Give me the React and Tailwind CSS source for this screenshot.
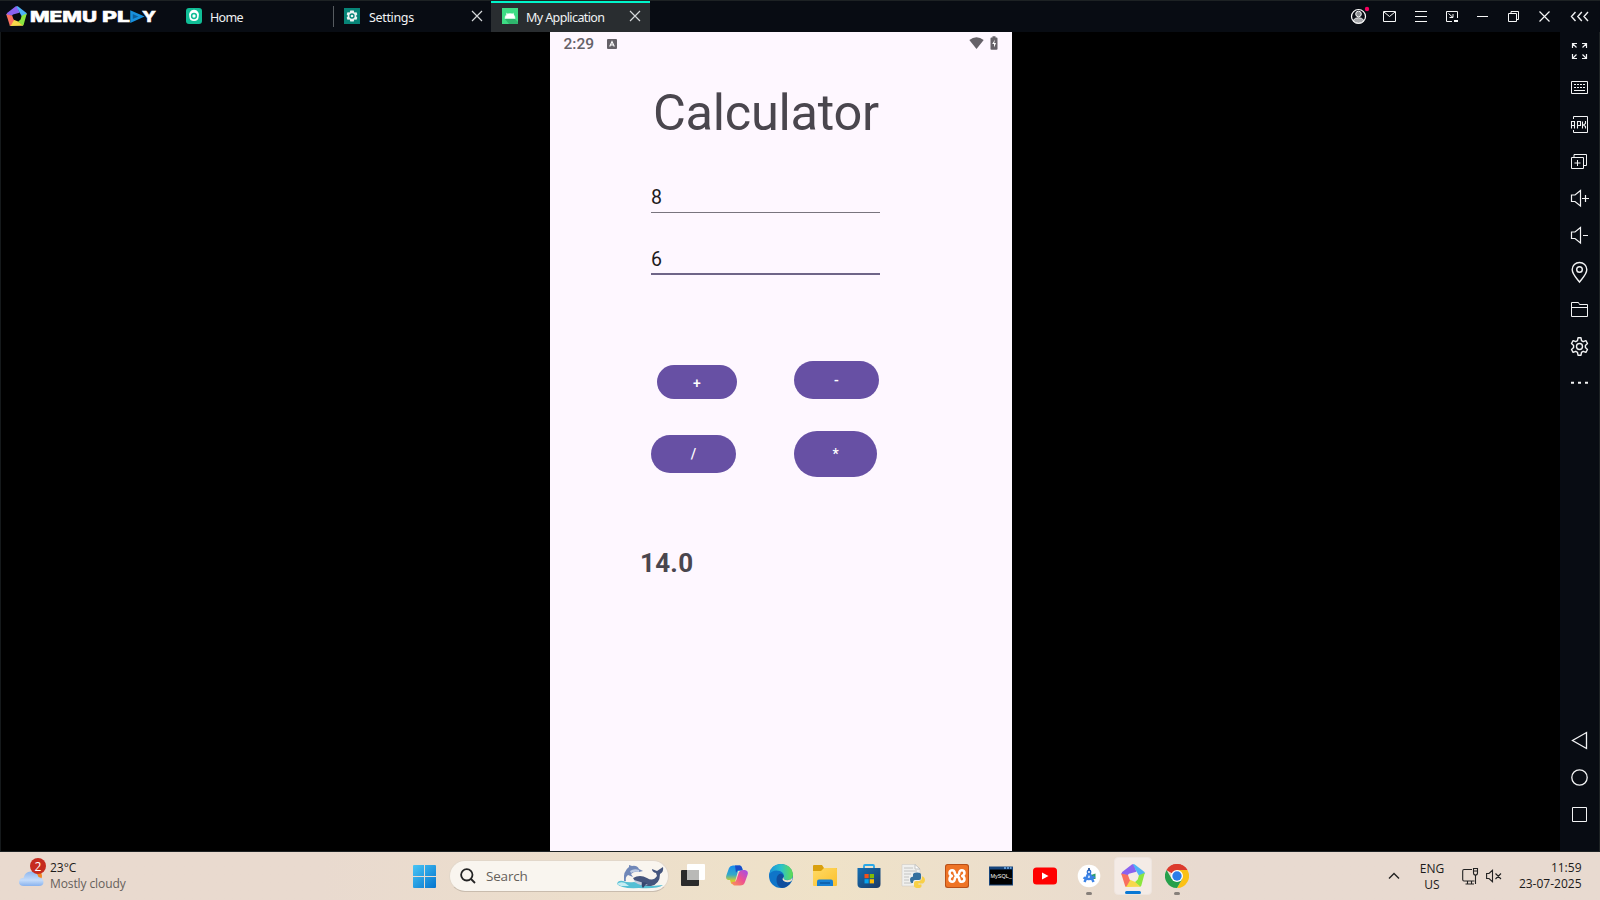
import React from "react";

const SEGOE = "font-['Open_Sans',sans-serif]";

function MemuLogo({ className }) {
  return (
    <svg className={className} viewBox="0 0 73 71">
      <path d="M3 25L34 1Q38 0 40 3L47 24L24 30L20 35L0 32Z" fill="#8a62f0" />
      <path d="M36 1L41 1L71 24Q74 27 72 30L56 38L47 22Z" fill="#4db2f7" />
      <path d="M73 27L62 67Q61 70 57 70L42 56L51 48L55 35Z" fill="#8be63f" />
      <path d="M60 70L16 71L12 68L25 48L42 55Z" fill="#f7d84a" />
      <path d="M0 29L13 70L17 69L27 51L21 34Z" fill="#f9705f" />
    </svg>
  );
}

function Wordmark() {
  return (
    <svg className="ml-[3px] h-[20px] w-[128px]" viewBox="0 0 128 20">
      <g fill="#fff" stroke="#fff" strokeWidth="0.5" fontFamily="Inter, sans-serif" fontWeight="800" fontSize="14.8">
        <text x="0" y="15.7" textLength="67" lengthAdjust="spacingAndGlyphs">MEMU</text>
        <text x="72" y="15.7" textLength="28" lengthAdjust="spacingAndGlyphs">PL</text>
        <text x="112" y="15.7" textLength="14" lengthAdjust="spacingAndGlyphs">Y</text>
      </g>
      <path d="M101.500 6.200L111.500 10.600L101.500 15Z" fill="#0c5f9c" stroke="#1790dd" strokeWidth="2.5" />
    </svg>
  );
}

const CloseX = () => (
  <svg className="h-[12px] w-[12px]" viewBox="0 0 12 12" stroke="#d5d8da" strokeWidth="1.2">
    <path d="M1 1L11 11M11 1L1 11" />
  </svg>
);

const HEADER_ICONS = [
  <g key="user">
    <circle cx="15.5" cy="16.5" r="7" fill="#0a0e15" stroke="#fff" strokeWidth="1.2" />
    <circle cx="15.5" cy="14" r="2.8" fill="#8d9094" />
    <path d="M10 20.5Q12 17.7 15.5 17.7T21 20.5Q19 23.2 15.5 23.2T10 20.5Z" fill="#a5a7aa" />
    <circle cx="24" cy="9" r="2.2" fill="#f5005f" stroke="none" />
  </g>,
  <path key="mail" d="M9.500 11.500H21.500V21.500H9.500ZM10 12L15.500 16.500L21 12" />,
  <path key="menu" d="M10 11.500H22M10 16.500H22M10 21.500H22" />,
  <g key="pip">
    <path d="M16 21.500H10.500V11.500H21.500V18M12.500 13.500L17 17.500M17 14V17.500H13.500" />
    <path d="M18 21H22" strokeWidth="2" />
  </g>,
  <path key="min" d="M10 16.500H21" />,
  <path key="restore" d="M10.500 13.500H18.500V21.500H10.500ZM13 13.500V11.500H20.500V19.500H19" />,
  <path key="close" d="M10.500 11.500L20.500 21.500M20.500 11.500L10.500 21.500" strokeWidth="1.200" />,
];

const SIDE_ICONS = [
  <path key="full" strokeWidth="1.200" d="M12.500 16V11.500H17M12.500 11.500L16.500 15.500M22 11.500H26.500V16M26.500 11.500L22.500 15.500M12.500 22V26.500H17M12.500 26.500L16.500 22.500M22 26.500H26.500V22M26.500 26.500L22.500 22.500" />,
  <g key="keys">
    <path d="M11.500 12.500H27.500V24.500H11.500ZM14 21.500H25" />
    <path d="M14 15.500H26M14 18.500H26" strokeDasharray="2 1" />
  </g>,
  <g key="apk">
    <path d="M13.500 13V10.500H27.500V26.500H13.500V24" />
    <path d="M11.500 22.500V15.500H14.500V22.500M11.500 19.500H14.500M17.500 22.500V15.500H20.500V19.500H17.500M22.500 15.500V22.500M25.500 15V17.500L23.500 19L25.500 20.500V22.500" strokeWidth="1.100" />
  </g>,
  <path key="multi" d="M11.500 14.500H23.500V25.500H11.500ZM14 14.500V11.500H26.500V22.500H24M17.500 17V23M14.500 20H20.500" />,
  <path key="volup" strokeWidth="1.200" d="M20.500 10.500L15 15H11.500V21.500H15L20.500 26ZM22 18.500H29M25.500 15V22" />,
  <path key="voldn" strokeWidth="1.200" d="M20.500 10.500L15 15H11.500V21.500H15L20.500 26ZM23 18.500H28" />,
  <g key="pin" strokeWidth="1.4">
    <path d="M19.500 28C16 23.500 12.200 20 12.200 15.500A7.300 7 0 0 1 26.800 15.500C26.800 20 23 23.500 19.500 28Z" />
    <circle cx="19.500" cy="15.500" r="2.800" />
  </g>,
  <path key="folder" d="M11.500 25.500V11.500H18.500L19.500 13.500H27.500V25.500ZM12 16.500H27" />,
  <g key="gear" strokeWidth="1.4">
    <path d="M17.500 12.700L18 9.800H21L21.500 12.700L23.200 13.700L25.900 12.700L27.500 15.500L25.400 17.400V19.600L27.500 21.500L25.900 24.300L23.200 23.300L21.500 24.300L21 27.200H18L17.500 24.300L15.800 23.300L13.100 24.300L11.500 21.500L13.600 19.600V17.400L11.500 15.500L13.100 12.700L15.800 13.700Z" strokeLinejoin="round" />
    <circle cx="19.500" cy="18.500" r="3" />
  </g>,
  <path key="more" d="M11 17.800H14M18 17.800H21M25 17.800H28" strokeWidth="2" />,
];

const NAV_ICONS = [
  <path key="back" d="M26.500 10.500V26.500L12.500 18.500Z" strokeWidth="1.300" />,
  <circle key="home" cx="19.500" cy="18.500" r="7.700" strokeWidth="1.300" />,
  <path key="recent" d="M12.500 11.500H26.500V25.500H12.500Z" />,
];

const SideIcon = ({ children }) => (
  <svg className="h-[37px] w-[39px] shrink-0" viewBox="0 0 39 37" fill="none" stroke="#f2f3f4" strokeWidth="1">
    {children}
  </svg>
);

function Tabs() {
  return (
    <div className="flex h-[32px] font-['Noto_Sans',sans-serif] text-[12.5px] text-[#f0f2f3]">
      <div className="flex w-[163px] items-center pl-[16px]">
        <svg className="h-[16px] w-[16px]" viewBox="0 0 16 16">
          <rect width="16" height="16" rx="3" fill="#10bd96" />
          <path d="M3.300 8.500A5 5 0 1 1 12.700 8.500Q12.500 13 8 13T3.300 8.500Z" fill="#fff" />
          <circle cx="8" cy="8" r="2.400" fill="#fff" stroke="#10bd96" strokeWidth="1.500" />
        </svg>
        <span className="ml-[8px] pt-[4px] tracking-[-0.7px]">Home</span>
      </div>
      <div className="flex w-[158px] items-center">
        <div className="h-[21px] w-px bg-[#565b60]" />
        <svg className="ml-[10px] h-[16px] w-[16px]" viewBox="0 0 16 16">
          <rect width="16" height="16" fill="#078477" />
          <path d="M8 2.500L9.700 2.500L10.300 4.500L12.500 4.300L13.300 6.300L12 8L13.300 9.800L12.500 11.700L10.300 11.500L9.700 13.500H6.300L5.700 11.500L3.500 11.700L2.700 9.800L4 8L2.700 6.300L3.500 4.300L5.700 4.500L6.300 2.500Z" fill="#eef5f4" />
          <circle cx="8" cy="8" r="2" fill="none" stroke="#078477" strokeWidth="1.300" />
        </svg>
        <span className="ml-[9px] w-[102px] pt-[4px] tracking-[-0.35px]">Settings</span>
        <CloseX />
      </div>
      <div className="mt-px flex w-[159px] items-center border-t-2 border-[#00f5cb] bg-[#292d30] pl-[11px]">
        <svg className="-mt-[3px] h-[16px] w-[16px]" viewBox="0 0 16 16">
          <rect width="16" height="16" fill="#3ddc84" />
          <path d="M3 11L13 11L16 14V16H7Z" fill="#2fb56d" />
          <path d="M3 10.500Q3.300 7.500 5.500 6.200L4.700 4.800M13 10.500Q12.700 7.500 10.500 6.200L11.300 4.800M3 10.500Q3.300 5.500 8 5.500T13 10.500Z" fill="#fff" stroke="#fff" strokeWidth="0.400" />
        </svg>
        <span className="ml-[8px] w-[103px] pt-[1px] tracking-[-0.6px]">My Application</span>
        <div className="-mt-[3px]"><CloseX /></div>
      </div>
    </div>
  );
}

const OpButton = ({ className, children }) => (
  <div className={"flex items-center justify-center rounded-full bg-[#6750a4] text-[14px] font-medium text-white " + className}>
    {children}
  </div>
);

function Phone() {
  return (
    <main className="h-[819px] w-[462px] bg-[#fef7ff] font-[Roboto,sans-serif]">
      <div className="flex h-[24px] items-center pl-[13.5px] pr-[14px] text-[#656168]">
        <span className="w-[43.5px] pt-[2px] text-[15.5px] font-medium">2:29</span>
        <svg className="h-[10px] w-[10px]" viewBox="0 0 10 10">
          <rect width="10" height="10" rx="1" fill="#656168" />
          <path d="M2.700 7.500L5 2.500L7.300 7.500M3.500 6H6.500" stroke="#fff" strokeWidth="1.100" fill="none" />
        </svg>
        <svg className="-mt-[2px] ml-auto h-[12px] w-[15px]" viewBox="0 0 15 12">
          <path d="M0.300 3Q7.500 -2.500 14.700 3L7.500 12Z" fill="#656168" />
        </svg>
        <svg className="-mt-[2px] ml-[6px] h-[14px] w-[8px]" viewBox="0 0 8 14">
          <path d="M0.500 2.500Q0.500 1.500 1.500 1.500H2.500V0.300H5.500V1.500H6.500Q7.500 1.500 7.500 2.500V13Q7.500 13.700 6.500 13.700H1.500Q0.500 13.700 0.500 13Z" fill="#656168" />
          <path d="M5 3.500L2.200 8H4V11.500L6 7H4.200Z" fill="#fff" />
        </svg>
      </div>
      <h1 className="mt-[27px] pl-[103px] text-[50.5px] leading-[60px] tracking-[-0.28px] text-[#4a464e]">Calculator</h1>
      <div className="ml-[101px] mt-[37px] w-[229px] text-[19.5px] text-[#1d1b20]">
        <div className="h-[33px] border-b border-[#79747e] leading-[36px]">8</div>
        <div className="mt-[28px] h-[34px] border-b-2 border-[#6f6588] leading-[38px]">6</div>
      </div>
      <div className="ml-[101px] mt-[86px] flex h-[38px] items-end">
        <OpButton className="ml-[6px] h-[34px] w-[80px] pt-[2px]">+</OpButton>
        <OpButton className="ml-[57px] h-[38px] w-[85px]">-</OpButton>
      </div>
      <div className="ml-[101px] mt-[32px] flex h-[46px] items-center">
        <OpButton className="h-[38px] w-[85px] pt-px">/</OpButton>
        <OpButton className="ml-[58px] h-[46px] w-[83px] pt-px">*</OpButton>
      </div>
      <div className="ml-[90px] mt-[71px] text-[26px] font-bold leading-[30px] tracking-[0.25px] text-[#4a464e]">14.0</div>
    </main>
  );
}

const TASK_ICONS = [
  <g key="view">
    <rect x="6" y="0" width="18" height="16" rx="1" fill="#fff" />
    <rect x="0" y="6" width="18" height="16" rx="1" fill="#2b2b2b" />
    <rect x="6" y="6" width="12" height="10" fill="#b9b9b7" />
  </g>,
  <g key="copilot">
    <path d="M8 1.500H15Q17 2 17.500 5L18 7H13L10 18Q9 21 6 19.500L5 16H3Q0 15 1.500 11L4 4Q5 1.500 8 1.500Z" fill="url(#cpA)" />
    <path d="M10 1.500H15Q17 2 17.500 6H14Q12 6 11 9Z" fill="#1b4cc8" />
    <path d="M18 6H20Q24 7 22.500 11L20 18Q19 21.500 15 21.500H9Q7 21 6.500 18H9Q11 18 12 14L14 8Q15 6 18 6Z" fill="url(#cpB)" />
  </g>,
  <g key="edge">
    <circle cx="12" cy="12" r="12" fill="#0f75c9" />
    <path d="M0.500 10Q2 0 12 0T24 10Q24 16 18 16Q14 16 14.500 13.500Q16 9 11 7Q4 5 0.500 10Z" fill="url(#edG)" />
    <path d="M14.500 13.500Q13 17 17 18Q20 19 22.500 17Q19 24 13 24Q7 22 7.500 15Q8 10 12 9.500Q15.500 10.500 14.500 13.500Z" fill="#104e9e" />
    <path d="M14.500 13Q14 16.200 18.500 16.200Q22 16 23.600 13.500L22.600 17Q19 19 16 17.800Q12 16 14.500 13Z" fill="#f0e2c8" />
  </g>,
  <g key="files">
    <path d="M0 2Q0 1 1 1H9L11 4H23Q24 4 24 5V20H0Z" fill="#d9a00f" />
    <path d="M0 7H8L11 4H23Q24 4 24 5V21Q24 22 23 22H1Q0 22 0 21Z" fill="url(#flG)" />
    <path d="M4 22V17.500Q4 15.500 6 15.500H18Q20 15.500 20 17.500V22Z" fill="#1780d4" />
    <path d="M7 19H17" stroke="#0b5aa5" strokeWidth="1.500" />
  </g>,
  <g key="store">
    <path d="M7 5V2Q7 1 8 1H16Q17 1 17 2V5" fill="none" stroke="#28a8e8" strokeWidth="1.800" />
    <path d="M0.500 4H23.500V20Q23.500 24 19.500 24H4.500Q0.500 24 0.500 20Z" fill="url(#stG)" />
    <path d="M7.500 10H11.700V14.200H7.500Z" fill="#f2511b" />
    <path d="M12.700 10H17V14.200H12.700Z" fill="#80ba06" />
    <path d="M7.500 15.200H11.700V19.400H7.500Z" fill="#05a5f0" />
    <path d="M12.700 15.200H17V19.400H12.700Z" fill="#fdba08" />
  </g>,
  <g key="python">
    <path d="M1 0.500H14L19 5V22H1Z" fill="#f0f0ee" stroke="#c9c7c2" strokeWidth="0.500" />
    <path d="M14 0.500L19 5H14ZM3 4H12M3 7H16M3 10H10M3 13H8M3 16H8M3 19H11" fill="#fff" stroke="#bdbdbb" strokeWidth="0.900" />
    <path d="M12 14V10.500Q12 8.500 16 8.500T20 10.500V14Q20 16 18 16H14Q12 16 12 19H10.500Q9 18 9 15.500T12 12.500H16" fill="#34709f" />
    <path d="M21 12.500H22Q24 13.500 24 16T22 19.500H17.500V20.500H20.500V22Q20.500 24 17 24T13 22V19Q13 17 15 17H18.500Q21 16.500 21 14Z" fill="#f8d047" />
  </g>,
  <g key="xampp">
    <rect width="24" height="24" rx="2.500" fill="#b95018" />
    <rect x="1" y="1" width="22" height="22" rx="2" fill="#ee7426" />
    <path d="M6.800 12Q4.500 11 4.500 8.800Q4.700 6.200 7.200 6.200Q9.500 6.200 9.800 9Q10 11.200 12 11.200T14.200 9Q14.500 6.200 16.800 6.200Q19.300 6.200 19.500 8.800Q19.500 11 17.200 12Q19.500 13 19.500 15.200Q19.300 17.800 16.800 17.800Q14.500 17.800 14.200 15Q14 12.800 12 12.800T9.800 15Q9.500 17.800 7.200 17.800Q4.700 17.800 4.500 15.200Q4.500 13 6.800 12Z" fill="none" stroke="#fff" strokeWidth="2.500" strokeLinejoin="round" />
  </g>,
  <g key="mysql">
    <rect x="0" y="2.500" width="24" height="19" fill="#16457c" />
    <rect x="1" y="5.500" width="22" height="15" fill="#000" />
    <path d="M15 4H17M18 4H20M21 4H22.500" stroke="#78b5ef" strokeWidth="1.300" />
    <text x="1.500" y="13.500" fontSize="5.500" fontFamily="Liberation Sans, sans-serif" fill="#fff">MySQL_</text>
  </g>,
  <g key="youtube">
    <rect x="0" y="3.500" width="24" height="17" rx="3.500" fill="#f00" />
    <path d="M9 8.500L15.500 12L9 15.500Z" fill="#fff" />
  </g>,
  <g key="studio">
    <circle cx="12" cy="12" r="11.300" fill="#fff" />
    <path d="M14 11L18.500 9.500V15H14Z" fill="#2e9e68" />
    <path d="M12 8L7.500 18M12 8L16.500 18M6.500 13.500Q12 17 17.500 12.500" fill="none" stroke="#3b82e6" strokeWidth="2.500" />
    <circle cx="12" cy="8" r="1.700" fill="#fff" stroke="#3477d8" strokeWidth="1.500" />
    <path d="M12 4V6.500" stroke="#2a579e" strokeWidth="1.800" />
  </g>,
  null,
  <g key="chrome">
    <path d="M12 12L1.600 6A12 12 0 0 1 22.400 6Z" fill="#dc3b2d" />
    <path d="M12 12V6H22.400A12 12 0 0 1 12 24L17.200 15Z" fill="#fbc116" />
    <path d="M12 12L17.200 15L12 24A12 12 0 0 1 1.600 6L6.800 15Z" fill="#26a04b" />
    <path d="M1.600 6A12 12 0 0 1 22.400 6H12L6.800 9Z" fill="#dc3b2d" />
    <circle cx="12" cy="12" r="6" fill="#fff" />
    <circle cx="12" cy="12" r="4.700" fill="#2b7de9" />
  </g>,
];

function TaskIcon({ index, icon }) {
  if (index === 10) {
    return (
      <div className="flex h-[48px] w-[44px] items-center justify-center">
        <div className="flex h-[38px] w-[38px] flex-col items-center rounded-[4px] border border-[#eee5df] bg-[#f4ebe6] pt-[6px]">
          <MemuLogo className="h-[24px] w-[24px]" />
          <div className="mt-[4px] h-[3px] w-[16px] shrink-0 rounded-full bg-[#0a78d4]" />
        </div>
      </div>
    );
  }
  return (
    <div className="flex h-[48px] w-[44px] flex-col items-center pt-[12px]">
      <svg className="h-[24px] w-[24px] shrink-0" viewBox="0 0 24 24">{icon}</svg>
      {(index === 9 || index === 11) && <div className="mt-[4px] h-[3px] w-[6px] rounded-full bg-[#87807a]" />}
    </div>
  );
}

function Taskbar() {
  return (
    <footer className={"flex h-[48px] items-center bg-linear-to-r from-[#e9dacf] from-20% via-[#efe2c8] via-52% to-[#e8dad0] to-75% text-[12px] leading-[16px] text-[#1c1b1a] " + SEGOE}>
      <svg className="h-[48px] w-[50px]" viewBox="0 0 50 48">
        <circle cx="36" cy="24" r="6" fill="#f38420" />
        <path d="M24 34Q19 34 19 30Q19 26 23.500 26Q25 19 31.500 19.500Q37 20 38.500 25Q43.500 26 43.500 30Q43.500 34 39 34Z" fill="url(#clG)" />
        <circle cx="38" cy="14" r="8" fill="#c62b1f" />
        <text x="38" y="18.500" textAnchor="middle" fill="#fff" fontSize="12">2</text>
      </svg>
      <div className="w-[363px] pb-px">
        <div>23°C</div>
        <div className="tracking-[-0.1px] text-[#66605b]">Mostly cloudy</div>
      </div>
      <svg className="h-[23px] w-[23px]" viewBox="0 0 23 23" fill="url(#wnG)">
        <path d="M0 1Q0 0 1 0H11V11H0ZM12 0H22Q23 0 23 1V11H12ZM0 12H11V23H1Q0 23 0 22ZM12 12H23V22Q23 23 22 23H12Z" />
      </svg>
      <div className="ml-[13px] flex h-[32px] w-[220px] items-center rounded-full border border-b-[#c9bcae] border-[#e2d7ca] bg-[#f9f5ef] pl-[10px]">
        <svg className="h-[16px] w-[16px]" viewBox="0 0 16 16" fill="none" stroke="#242424" strokeWidth="1.800">
          <circle cx="6.800" cy="6.800" r="5.700" />
          <path d="M11 11L15 15" />
        </svg>
        <span className="ml-[10px] text-[13.500px] tracking-[-0.200px] text-[#65605a]">Search</span>
        <svg className="ml-auto mr-[4px] h-[25px] w-[47px]" viewBox="0 0 47 25">
          <path d="M0 20Q1 16 6 17Q11 19 17 18L35 22L46 21Q41 25 22 24Q4 25 0 20Z" fill="#55bfd4" />
          <path d="M0 20Q3 17 8 19L12 22L4 22Z" fill="#c5edf2" />
          <path d="M7 17Q6 7 12 3L12 1L15 2Q20 1 22 5L26 7L22 8Q17 7 14 10L16 13L11 11Q8 13 9 17Z" fill="#7087b8" />
          <path d="M13 7Q17 4 22 6L22 8Q17 7 14 9Z" fill="#bdcbe3" />
          <path d="M16 14Q23 10 30 14Q36 18 40 12L39 9Q35 8 35 5L40 7L46 3Q47 8 43 10Q43 20 34 22Q20 23 16 14Z" fill="#45557d" />
          <path d="M17 16Q25 18 31 21Q20 23 16 15Z" fill="#c3cddd" />
          <path d="M25 18L30 19L26 24Q24 22 25 18Z" fill="#35476f" />
        </svg>
      </div>
      <div className="ml-[2px] flex w-[528px]">
        {TASK_ICONS.map((icon, i) => <TaskIcon key={i} index={i} icon={icon} />)}
      </div>
      <svg className="ml-[189px] h-[12px] w-[12px]" viewBox="0 0 12 12" fill="none" stroke="#222" strokeWidth="1.400">
        <path d="M1 8.500L6 3.500L11 8.500" />
      </svg>
      <div className="w-[64px] pt-[2px] text-center">
        <div>ENG</div>
        <div>US</div>
      </div>
      <svg className="ml-[-2px] h-[18px] w-[17px]" viewBox="0 0 17 18" fill="none" stroke="#222" strokeWidth="1.100">
        <path d="M10 2.500H2Q0.700 2.500 0.700 4V12.500Q0.700 14 2 14H12.500M5.500 14V17M9.500 14V17M3.500 17H12M13.500 8V17M11.500 1.500H15.500V6Q15.500 8 13.500 8T11.500 6ZM11.500 4H15.500" />
      </svg>
      <svg className="ml-[7px] h-[14px] w-[17px]" viewBox="0 0 17 14" fill="none" stroke="#222" strokeWidth="1.100">
        <path d="M0.600 4.500H3L6.500 1.300V12.700L3 9.500H0.600ZM9.500 4.500L15 10M15 4.500L9.500 10" />
      </svg>
      <div className="w-[78.500px] text-right">
        <div>11:59</div>
        <div>23-07-2025</div>
      </div>
    </footer>
  );
}

const Gradients = () => (
  <svg className="absolute h-0 w-0">
    <defs>
      <linearGradient id="wnG" x1="0" y1="0" x2="1" y2="1"><stop stopColor="#49c5f5" /><stop offset="1" stopColor="#0474ce" /></linearGradient>
      <linearGradient id="clG" x1="0" y1="0" x2="0" y2="1"><stop stopColor="#8fb7ee" /><stop offset="0.600" stopColor="#c5dcfa" /><stop offset="1" stopColor="#88b2ee" /></linearGradient>
      <linearGradient id="cpA" x1="0" y1="0" x2="0" y2="1"><stop stopColor="#168cf0" /><stop offset="0.500" stopColor="#33a9c8" /><stop offset="0.800" stopColor="#c9cd35" /><stop offset="1" stopColor="#f2b936" /></linearGradient>
      <linearGradient id="cpB" x1="1" y1="0" x2="0" y2="1"><stop stopColor="#9c4df0" /><stop offset="0.500" stopColor="#ee5091" /><stop offset="1" stopColor="#fa984f" /></linearGradient>
      <linearGradient id="edG"><stop stopColor="#1993dc" /><stop offset="0.500" stopColor="#2cc3c8" /><stop offset="1" stopColor="#63dd4c" /></linearGradient>
      <linearGradient id="flG" x1="0" y1="0" x2="1" y2="1"><stop stopColor="#ffda65" /><stop offset="1" stopColor="#fbc02d" /></linearGradient>
      <linearGradient id="stG" x1="0" y1="0" x2="1" y2="1"><stop stopColor="#146fb4" /><stop offset="1" stopColor="#1b3964" /></linearGradient>
    </defs>
  </svg>
);

export default function App() {
  return (
    <div className="h-[900px] w-[1600px] overflow-hidden bg-black">
      <Gradients />
      <header className="flex h-[32px] items-center bg-[#080c13] shadow-[inset_0_1px_0_#1d2224]">
        <MemuLogo className="ml-[6px] h-[20px] w-[21px]" />
        <Wordmark />
        <div className="ml-[12px]"><Tabs /></div>
        <div className="ml-auto flex">
          {HEADER_ICONS.map((icon, i) => (
            <svg key={i} className="h-[32px] w-[31px]" viewBox="0 0 31 32" fill="none" stroke="#f6f7f7" strokeWidth="1">{icon}</svg>
          ))}
          <svg className="h-[32px] w-[40px]" viewBox="0 0 40 32" fill="none" stroke="#f0f1f2" strokeWidth="1.400">
            <path d="M15.500 12L11.500 16.500L15.500 21M21.800 12L17.800 16.500L21.800 21M28 12L24 16.500L28 21" />
          </svg>
        </div>
      </header>
      <div className="flex h-[819px] border-l border-[#15191b]">
        <div className="flex flex-1 justify-start bg-black pl-[549px]"><Phone /></div>
        <aside className="flex w-[40px] flex-col border-r border-[#1d2224] bg-[#080c13]">
          {SIDE_ICONS.map((icon, i) => <SideIcon key={i}>{icon}</SideIcon>)}
          <div className="mt-auto flex flex-col pb-[18px]">
            {NAV_ICONS.map((icon, i) => <SideIcon key={i}>{icon}</SideIcon>)}
          </div>
        </aside>
      </div>
      <div className="h-px bg-[#1d2224]" />
      <Taskbar />
    </div>
  );
}
